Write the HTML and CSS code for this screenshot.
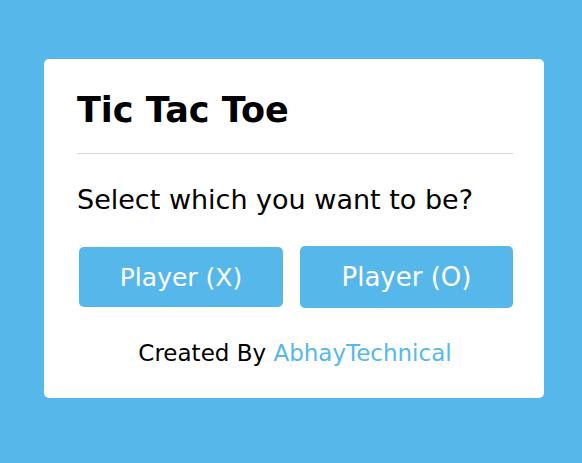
FILE: index.html
```html
<!DOCTYPE html>
<html>
<head>
<meta charset="utf-8">
<link rel="stylesheet" href="styles.css">
</head>
<body>
<div class="select-box">
  <header class="title">Tic Tac Toe</header>
  <div class="content">
    <div class="question">Select which you want to be?</div>
    <div class="options">
      <button class="btn playerX">Player (X)</button>
      <button class="btn playerO">Player (O)</button>
    </div>
    <div class="credit">Created By <a href="#">AbhayTechnical</a></div>
  </div>
</div>
</body>
</html>
```
FILE: styles.css
```css
* { box-sizing: border-box; margin: 0; padding: 0; }
html, body { height: 100%; }
body {
  background: #56b8ea;
  font-family: "DejaVu Sans", sans-serif;
  display: flex;
  justify-content: center;
  align-items: flex-start;
  padding: 59px 0 0 6px;
}
.select-box {
  width: 500px;
  height: 339px;
  background: #fff;
  border-radius: 5px;
  padding: 29px 31px 0 33px;
}
.title {
  font-size: 35px;
  font-weight: 700;
  color: #000;
  line-height: 44px;
  padding-bottom: 21px;
  border-bottom: 1px solid #d6d6d6;
}
.question {
  font-size: 27px;
  color: #000;
  line-height: 32px;
  margin-top: 30px;
}
.options {
  display: flex;
  align-items: center;
  margin-top: 30px;
  height: 62px;
}
.btn {
  border: none;
  outline: none;
  background: #56b8ea;
  color: #fff;
  font-family: inherit;
  font-size: 25px;
  border-radius: 5px;
  cursor: pointer;
}
.playerX { width: 204px; height: 60px; margin-left: 2px; }
.playerO { width: 213px; height: 62px; margin-left: 17px; font-size: 26px; }
.credit {
  text-align: center;
  font-size: 23px;
  color: #000;
  margin-top: 32px;
  line-height: 26px;
}
.credit a { color: #56b8ea; text-decoration: none; }
```
